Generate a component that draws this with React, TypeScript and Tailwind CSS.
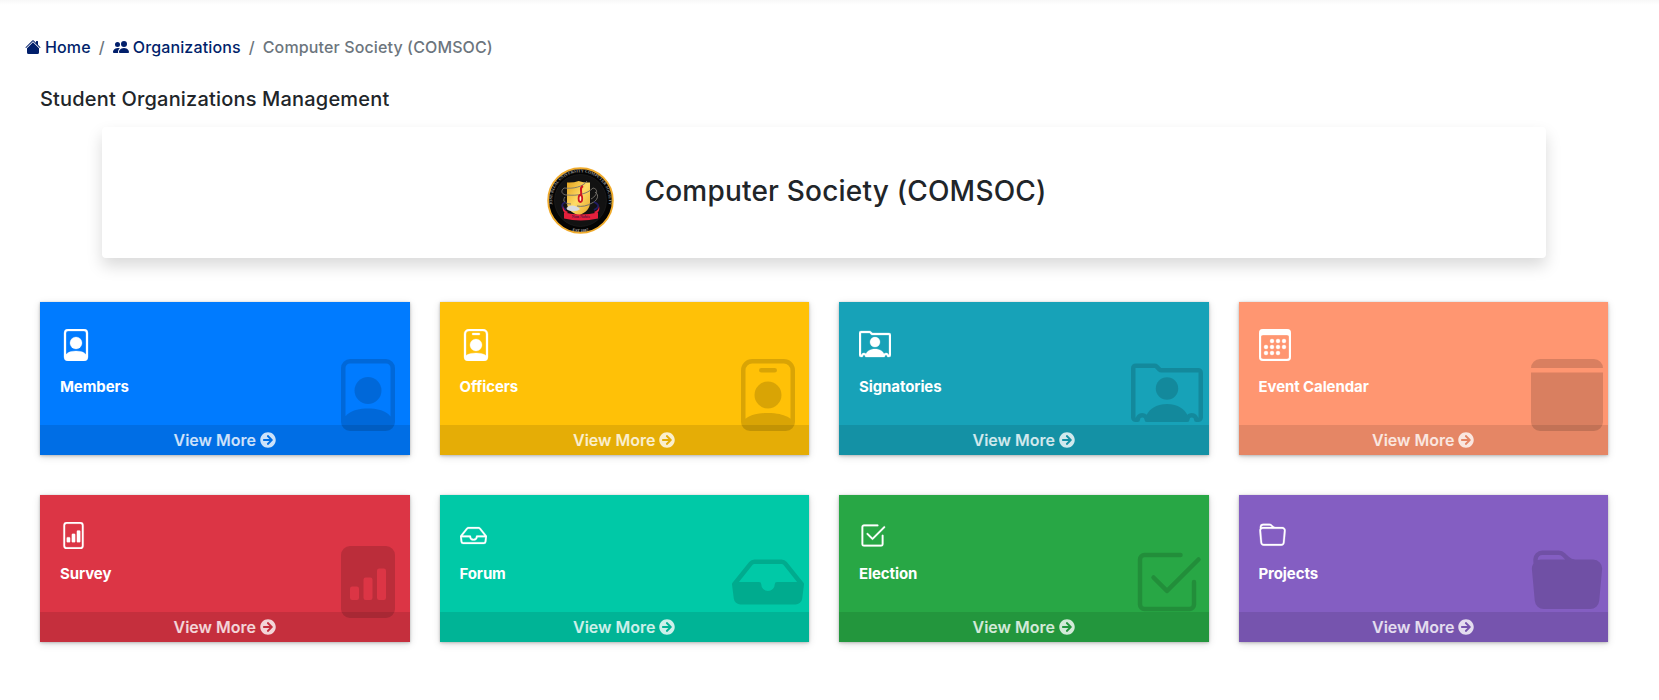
import React from "react";
import {
  BsHouseFill,
  BsPeopleFill,
  BsFilePerson,
  BsPersonBadge,
  BsPersonRolodex,
  BsCalendar3,
  BsCalendar3Fill,
  BsFileBarGraph,
  BsFileBarGraphFill,
  BsInbox,
  BsInboxFill,
  BsCheck2Square,
  BsFolder,
  BsFolderFill,
} from "react-icons/bs";
import { FaArrowCircleRight } from "react-icons/fa";
import type { IconType } from "react-icons";

type Tile = { label: string; color: string; icon: IconType; backdrop: IconType };

const mainTiles: Tile[] = [
  { label: "Members", color: "bg-[#007bff]", icon: BsFilePerson, backdrop: BsFilePerson },
  { label: "Officers", color: "bg-[#ffc107]", icon: BsPersonBadge, backdrop: BsPersonBadge },
  { label: "Signatories", color: "bg-[#17a2b8]", icon: BsPersonRolodex, backdrop: BsPersonRolodex },
  { label: "Event Calendar", color: "bg-[#ff9671]", icon: BsCalendar3, backdrop: BsCalendar3Fill },
];

const moreTiles: Tile[] = [
  { label: "Survey", color: "bg-[#dc3545]", icon: BsFileBarGraph, backdrop: BsFileBarGraphFill },
  { label: "Forum", color: "bg-[#00c9a7]", icon: BsInbox, backdrop: BsInboxFill },
  { label: "Election", color: "bg-[#28a745]", icon: BsCheck2Square, backdrop: BsCheck2Square },
  { label: "Projects", color: "bg-[#845ec2]", icon: BsFolder, backdrop: BsFolderFill },
];

function SmallBox({ tile, compact }: { tile: Tile; compact?: boolean }) {
  const Icon = tile.icon;
  const Backdrop = tile.backdrop;
  return (
    <div
      className={`relative flex flex-col text-white shadow-[0_0_1px_rgba(0,0,0,0.125),0_1px_3px_rgba(0,0,0,0.2),0_2px_8px_rgba(0,0,0,0.13)] ${tile.color} ${compact ? "h-[147px]" : "h-[153px]"}`}
    >
      <div className="flex-1 px-5 pt-[27px]">
        <Icon className={compact ? "size-[27px]" : "size-8"} stroke="currentColor" strokeWidth={0.15} />
        <p className={`text-[15px] leading-6 font-bold tracking-[-0.1px] ${compact ? "mt-[13px]" : "mt-[14px]"}`}>{tile.label}</p>
      </div>
      <Backdrop className="absolute right-[5.5px] bottom-6 size-[72px] text-black/15" />
      <a href="#" className="relative flex h-[30px] items-center justify-center gap-1 bg-black/10 text-base font-semibold text-white/80">
        View More <FaArrowCircleRight className="size-4" />
      </a>
    </div>
  );
}

function Seal() {
  return (
    <svg viewBox="0 0 67 67" className="size-[67px]">
      <defs>
        <path id="seal-top" d="M7.5 45 A28.4 28.4 0 1 1 59.500 45" />
        <path id="seal-bottom" d="M17 60.200 A31 31 0 0 0 50 60.200" />
        <linearGradient id="shield" x1="0" x2="1" y1="0" y2="1">
          <stop offset="0" stopColor="#e3a11c" />
          <stop offset="0.5" stopColor="#ffdc66" />
          <stop offset="1" stopColor="#e3a425" />
        </linearGradient>
      </defs>
      <circle cx="33.5" cy="33.5" r="32.3" fill="#040404" stroke="#f0ab2c" strokeWidth="1.9" />
      <circle cx="33.5" cy="33.5" r="26" fill="#121212" stroke="#262626" strokeWidth="0.5" />
      <text fill="#9a9a9a" fontSize="4.2" fontFamily="Liberation Serif, serif" fontWeight="bold" textAnchor="middle">
        <textPath href="#seal-top" startOffset="50%">JOSE RIZAL UNIVERSITY COMPUTER SOCIETY</textPath>
      </text>
      <text fill="#b0b0b0" fontSize="4" fontFamily="Liberation Serif, serif" fontWeight="bold" textAnchor="middle">
        <textPath href="#seal-bottom" startOffset="50%">EST 1987</textPath>
      </text>
      <path d="M20 15.5q6 .5 11.700-1.500 5.600 2 11.300 1.500v20c0 6-4 10-11.300 13C24 45.500 20 41.500 20 35.500z" fill="url(#shield)" />
      <path d="M40 14c-4 6-14 8-23 7-4 3-2 7 3 7 11 1 20-1 26-7 6 1 4 8-2 11" fill="none" stroke="#77736c" strokeWidth="0.9" />
      <path d="M18 30c-3 4 0 7 6 7M48 25c5 3 2 9-3 11-5 3-10 4-15 3" fill="none" stroke="#77736c" strokeWidth="1" />
      <path d="M36 19c-4 2-1 4-2 9" fill="none" stroke="#ce1720" strokeWidth="2" />
      <ellipse cx="33.4" cy="31.5" rx="1.8" ry="3.5" fill="#fff1c0" stroke="#ce1720" strokeWidth="1.8" />
      <path d="M19 35c-6 2-4 6 0 8M47 35c5 2 6 5 0 8" fill="none" stroke="#211c62" strokeWidth="1.8" />
      <path d="M16 39c0 3 2 5 5 6l-2 2c-3-2-4-5-3-8zM52 39c0 3-2 5-5 6l2 2c3-2 4-5 3-8z" fill="#e5203c" />
      <path d="M17 45.500q16.500 4 34 0v6q-17.500 4-34 0z" fill="#e5203c" />
      <path d="M19.500 41c3-4 10-3 13.500 1-3 3-10 2.500-13 .5z" fill="#d9dcdf" />
      <text x="33.8" y="51.4" textAnchor="middle" fill="#5c1440" fontSize="4" fontWeight="bold" fontFamily="Liberation Serif, serif">Non Nobis</text>
    </svg>
  );
}

export default function App() {
  return (
    <div className="h-[700px] w-full overflow-hidden bg-white font-['Inter',sans-serif] text-[#212529]">
      <div className="h-[5px] bg-linear-to-b from-[#f8f8f8] to-white" />
      <nav className="mt-[30px] flex h-6 items-center pl-[25px] text-base font-medium tracking-[0.13px] text-[#6c757d]">
        <a href="#" className="flex items-center gap-1 text-[#011f6b]">
          <BsHouseFill className="size-4" />
          Home
        </a>
        <span className="px-2">/</span>
        <a href="#" className="flex items-center gap-1 text-[#011f6b]">
          <BsPeopleFill className="size-4" />
          Organizations
        </a>
        <span className="px-2">/</span>
        <span>Computer Society (COMSOC)</span>
      </nav>
      <main className="pr-[51px] pl-10">
        <h1 className="mt-7 text-xl leading-6 font-medium tracking-[0.18px]">Student Organizations Management</h1>
        <section className="mx-[62px] mt-4 flex h-[131px] rounded bg-white pt-10 pl-[445px] shadow-[0_8px_16px_rgba(0,0,0,0.15)]">
          <Seal />
          <h2 className="ml-[30.5px] pt-[7px] text-[28px] leading-[34px] font-medium tracking-[0.2px]">Computer Society (COMSOC)</h2>
        </section>
        <div className="mt-11 grid grid-cols-4 gap-[30px]">
          {mainTiles.map((t) => (
            <SmallBox key={t.label} tile={t} />
          ))}
        </div>
        <div className="mt-10 grid grid-cols-4 gap-[30px]">
          {moreTiles.map((t) => (
            <SmallBox key={t.label} tile={t} compact />
          ))}
        </div>
      </main>
    </div>
  );
}
